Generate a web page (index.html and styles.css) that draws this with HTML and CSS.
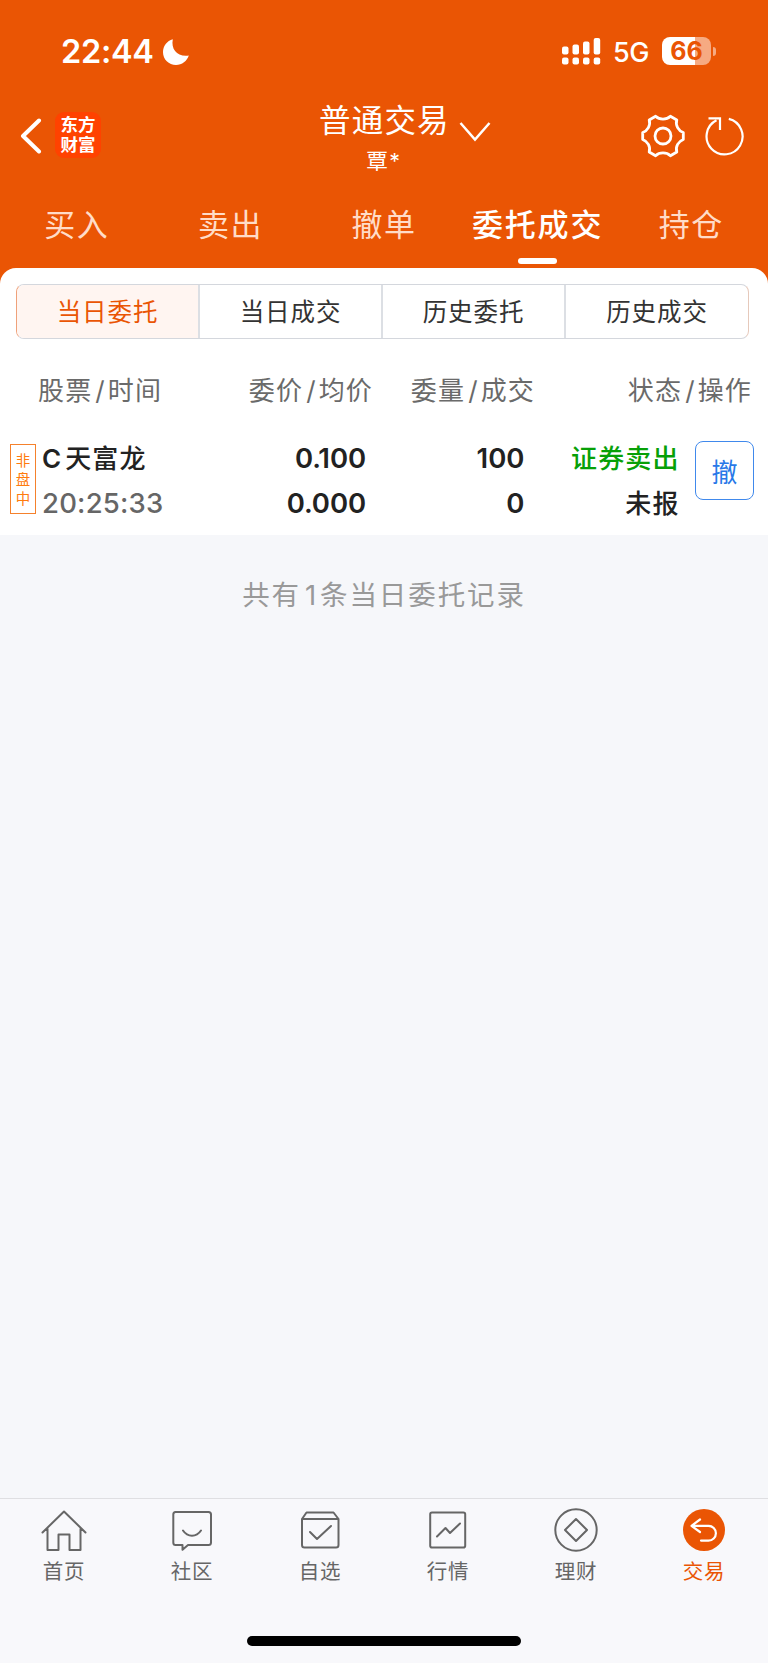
FILE: index.html
```html
<!DOCTYPE html>
<html lang="zh-CN">
<head>
<meta charset="utf-8">
<title>普通交易</title>
<link rel="stylesheet" href="styles.css">
</head>
<body>
<div class="app">
  <header class="top">
    <div class="status">
      <span class="time">22:44</span>
      <svg class="moon" width="26" height="26" viewBox="0 0 26 26"><path d="M9.8 0.2C7.8 10.5 14.5 18.2 25.8 16.6C24 22.2 19 26 13 26C5.8 26 0 20.2 0 13.2C0 7 4 1.800 9.800 .2Z" fill="#fff"/></svg>
      <svg class="signal" width="39" height="27" viewBox="0 0 39 27" fill="#fff"><rect x="0" y="8.500" width="6.500" height="8" rx="2"/><rect x="10.500" y="6.500" width="6.500" height="10" rx="2"/><rect x="21" y="3.500" width="6.500" height="13" rx="2"/><rect x="31.700" y="0" width="6.500" height="16.500" rx="2"/><rect x="0" y="19.500" width="6.500" height="7" rx="2"/><rect x="10.500" y="19.500" width="6.500" height="7" rx="2"/><rect x="21" y="19.500" width="6.500" height="7" rx="2"/><rect x="31.700" y="19.500" width="6.500" height="7" rx="2"/></svg>
      <span class="net">5G</span>
      <span class="battery">66</span><span class="nub"></span>
    </div>
    <div class="bar">
      <svg class="back" width="22" height="36" viewBox="0 0 22 36"><path d="M19 2.500L3 18L19 33.500" fill="none" stroke="#fff" stroke-width="4" stroke-linecap="round" stroke-linejoin="round"/></svg>
      <div class="logo"><span>东方</span><span>财富</span></div>
      <div class="heading"><div class="title">普通交易</div><div class="user">覃*</div></div>
      <svg class="down" width="32" height="22" viewBox="0 0 32 22"><path d="M1.500 2L16 18.500L30.500 2" fill="none" stroke="#fff" stroke-width="2.500"/></svg>
      <svg class="gear" width="46" height="46" viewBox="0 0 46 46" fill="none" stroke="#fff" stroke-width="2.800" stroke-linejoin="round"><circle cx="23" cy="23" r="8"/><path d="M15.600 3.300Q18.500 6.200 23 6.200T30.400 3.300L36.800 7Q35.600 11 37.600 14.600T43.300 19.500V26.500Q39.600 27.800 37.600 31.400T36.800 39L30.400 42.700Q27.500 39.800 23 39.800T15.600 42.700L9.200 39Q10.400 35 8.400 31.400T2.700 26.500V19.500Q6.400 18.200 8.400 14.600T9.200 7Z"/></svg>
      <svg class="refresh" width="40" height="40" viewBox="0 0 40 40" fill="none" stroke="#fff" stroke-width="2.200"><path d="M23.800 2.900A18 18 0 1 1 11.500 4.300"/><path d="M3.500 2.300H15V14"/></svg>
    </div>
    <nav class="tabs">
      <span>买入</span><span>卖出</span><span>撤单</span><span class="on">委托成交</span><span>持仓</span>
    </nav>
  </header>
  <main class="panel">
    <div class="segments"><span class="on">当日委托</span><span>当日成交</span><span>历史委托</span><span>历史成交</span></div>
    <div class="columns head"><span>股票<i>/</i>时间</span><span>委价<i>/</i>均价</span><span>委量<i>/</i>成交</span><span>状态<i>/</i>操作</span></div>
    <div class="order">
      <div class="tag"><span>非</span><span>盘</span><span>中</span></div>
      <div class="cell name"><b><em>C</em>天富龙</b><span class="when">20:25:33</span></div>
      <div class="cell price"><b>0.100</b><b>0.000</b></div>
      <div class="cell qty"><b>100</b><b>0</b></div>
      <div class="cell state"><b class="sell">证券卖出</b><b>未报</b></div>
      <button class="cancel">撤</button>
    </div>
  </main>
  <p class="summary">共有<i>1</i>条当日委托记录</p>
  <footer class="dock">
    <nav class="dock-items">
      <div class="item"><svg width="46" height="46" viewBox="0 0 46 46"><path d="M1.500 24.500L23 3.500L44.500 24.500M6.500 20.500V42H17.500V26.500H28.500V42H39.500V20.500"/></svg><span>首页</span></div>
      <div class="item"><svg width="46" height="46" viewBox="0 0 46 46"><path d="M6.500 4H39.500Q42 4 42 6.500V34.500Q42 37 39.500 37H19L13.500 41.800V37H6.500Q4.300 37 4.300 34.500V6.500Q4.300 4 6.500 4ZM14 22.500Q17.500 27.700 23 27.700T32 22.500"/></svg><span>社区</span></div>
      <div class="item"><svg width="46" height="46" viewBox="0 0 46 46"><path d="M5 11L9.500 4.500H36.500L41.500 11V37Q41.500 39.500 39 39.500H7.500Q5 39.500 5 37ZM5 11H41.500M13 24L20 31L34 18"/></svg><span>自选</span></div>
      <div class="item"><svg width="46" height="46" viewBox="0 0 46 46"><rect x="5.200" y="4.500" width="35" height="35" rx="1.800"/><path d="M12 28.500L20.500 20L25 25L35 15.500"/></svg><span>行情</span></div>
      <div class="item"><svg width="46" height="46" viewBox="0 0 46 46"><circle cx="23" cy="22" r="20.700"/><path d="M23 11L34 22L23 33L12 22Z"/></svg><span>理财</span></div>
      <div class="item on"><svg width="46" height="46" viewBox="0 0 46 46"><circle class="disc" cx="23" cy="22" r="21"/><path class="mark" d="M19 11.500L10.500 17.800L19 24M11 17.800H27.500A7.400 7.400 0 0 1 27.500 32.600H20"/></svg><span>交易</span></div>
    </nav>
    <div class="home-indicator"></div>
  </footer>
</div>
</body>
</html>
```
FILE: styles.css
```css
* { box-sizing: border-box; }
body { margin: 0; font-family: Inter, "Noto Sans CJK SC", sans-serif; color: #222; }
i, em { font-style: normal; }
.app { width: 768px; height: 1663px; display: flex; flex-direction: column; background: #f6f7fa; overflow: hidden; }
svg { display: block; flex: none; }

.top { height: 284px; flex: none; background: #ea5504; color: #fff; }
.status { height: 102px; padding: 0 51px 0 61px; display: flex; align-items: center; }
.time { width: 102px; font-size: 32.500px; font-weight: 600; line-height: 40px; letter-spacing: -.3px; margin-top: 1px; }
.moon { margin-top: 1px; }
.signal { margin-left: 373px; }
.net { width: 49px; margin-left: 12px; font-size: 27px; font-weight: 500; line-height: 34px; margin-top: 3px; letter-spacing: -.5px; }
.battery { width: 49px; flex: none; height: 28px; margin-top: -1px; border-radius: 8px; background: linear-gradient(to right, #fff 33px, #f6aa82 33px); color: #ea5504; font-size: 25px; line-height: 29px; font-weight: 700; text-align: center; }
.nub { width: 3px; flex: none; height: 9px; margin-left: 2px; background: #f6aa82; border-radius: 0 4px 4px 0; }

.bar { height: 80px; display: flex; align-items: flex-start; padding-left: 20px; }
.back { margin-top: 16px; }
.logo { width: 46px; height: 46px; margin: 10px 0 0 13px; padding-top: 3px; border-radius: 9px; background: #ff4200; display: flex; flex-direction: column; align-items: center; font-size: 17.500px; line-height: 19.500px; font-weight: 700; }
.heading { width: 128px; margin-left: 218px; text-align: center; white-space: nowrap; }
.title { height: 36px; line-height: 37px; font-size: 31.500px; letter-spacing: 1.200px; }
.user { font-size: 21.500px; line-height: 26px; margin-top: 10px; letter-spacing: 1.500px; padding-left: 2px; }
.down { margin: 19px 0 0 12px; }
.gear { margin: 11px 0 0 149px; }
.refresh { margin: 14px 0 0 19px; }

.tabs { display: grid; grid-template-columns: repeat(5, 1fr); height: 82px; padding-top: 23px; text-align: center; font-size: 31px; line-height: 40px; letter-spacing: 1.500px; color: #ffdcc8; font-weight: 400; }
.tabs span { display: flex; flex-direction: column; align-items: center; white-space: nowrap; }
.tabs .on { color: #fff; font-weight: 500; letter-spacing: 1.800px; }
.tabs .on::after { content: ""; width: 39px; height: 6px; margin-top: 13px; border-radius: 3px; background: #fff; }

.panel { height: 267px; margin-top: -16px; padding-top: 16px; flex: none; background: #fff; border-radius: 16px 16px 0 0; position: relative; z-index: 0; }
.segments { height: 55px; margin: 0 19px 0 16px; display: grid; grid-template-columns: 181px 183px 183px 1fr; border: 1px solid #d4d7dd; border-left-color: #efa17a; border-right-color: #e6c9bb; border-radius: 8px; overflow: hidden; font-size: 24.500px; line-height: 54px; letter-spacing: .9px; text-align: center; color: #333; }
.segments span + span { border-left: 2px solid #dcdfe4; }
.segments .on { color: #ea5504; background: #fff5f1; }

.columns { display: grid; grid-template-columns: 170px 203px 162px 217px; width: 752px; height: 80px; padding-top: 32px; font-size: 26px; line-height: 40px; letter-spacing: 1.150px; color: #6a6a6a; text-align: right; }
.columns i { margin: 0 2px 0 3px; }
.columns span:first-child { text-align: left; padding-left: 38px; }
.order { display: flex; padding: 18px 14px 0 10px; }
.tag { width: 26px; height: 70px; margin-top: 7px; padding-top: 6px; border: 1px solid #f5812c; color: #ff7b0d; display: flex; flex-direction: column; align-items: center; font-size: 14.500px; line-height: 19px; }
.cell { display: flex; flex-direction: column; font-size: 27.500px; line-height: 45px; margin-top: -1.500px; text-align: right; white-space: nowrap; }
.cell b { font-weight: 600; }
.name { width: 150px; margin-left: 6px; text-align: left; }
.name b, .state b { font-size: 26px; letter-spacing: 1.100px; font-weight: 500; }
.name em { font-weight: 600; margin-right: 3px; }
.when { color: #666; font-weight: 500; letter-spacing: .2px; }
.price { width: 174px; letter-spacing: -.1px; }
.qty { width: 158.500px; }
.state { width: 155px; }
.state .sell { color: #07a007; }
.cancel { width: 59px; height: 59px; margin: 4px 0 0 auto; padding: 0; border: 1px solid #4089ec; border-radius: 8px; background: #fff; color: #2878e8; font: 26px/54px "Noto Sans CJK SC", sans-serif; }
.summary { margin: 40px 0 0; text-align: center; font-size: 27.500px; line-height: 40px; letter-spacing: 1.900px; color: #999; }
.summary i { margin: 0 2px 0 4px; }

.dock { height: 165px; margin-top: auto; background: #f8f8fb; border-top: 1px solid #dfdfe2; }
.dock-items { display: grid; grid-template-columns: repeat(6, 1fr); height: 137px; padding-top: 9px; }
.item { display: flex; flex-direction: column; align-items: center; color: #666; font-size: 20.500px; line-height: 28px; letter-spacing: .7px; }
.item span { margin-top: 4px; }
.item svg { fill: none; stroke: #666; stroke-width: 2; stroke-linejoin: round; stroke-linecap: round; }
.item.on { color: #ea5504; }
.item .disc { fill: #ea5504; stroke: none; }
.item .mark { stroke: #fff; stroke-width: 2.200; }
.home-indicator { width: 274px; height: 10px; margin: 0 auto; border-radius: 5px; background: #000; }
```
